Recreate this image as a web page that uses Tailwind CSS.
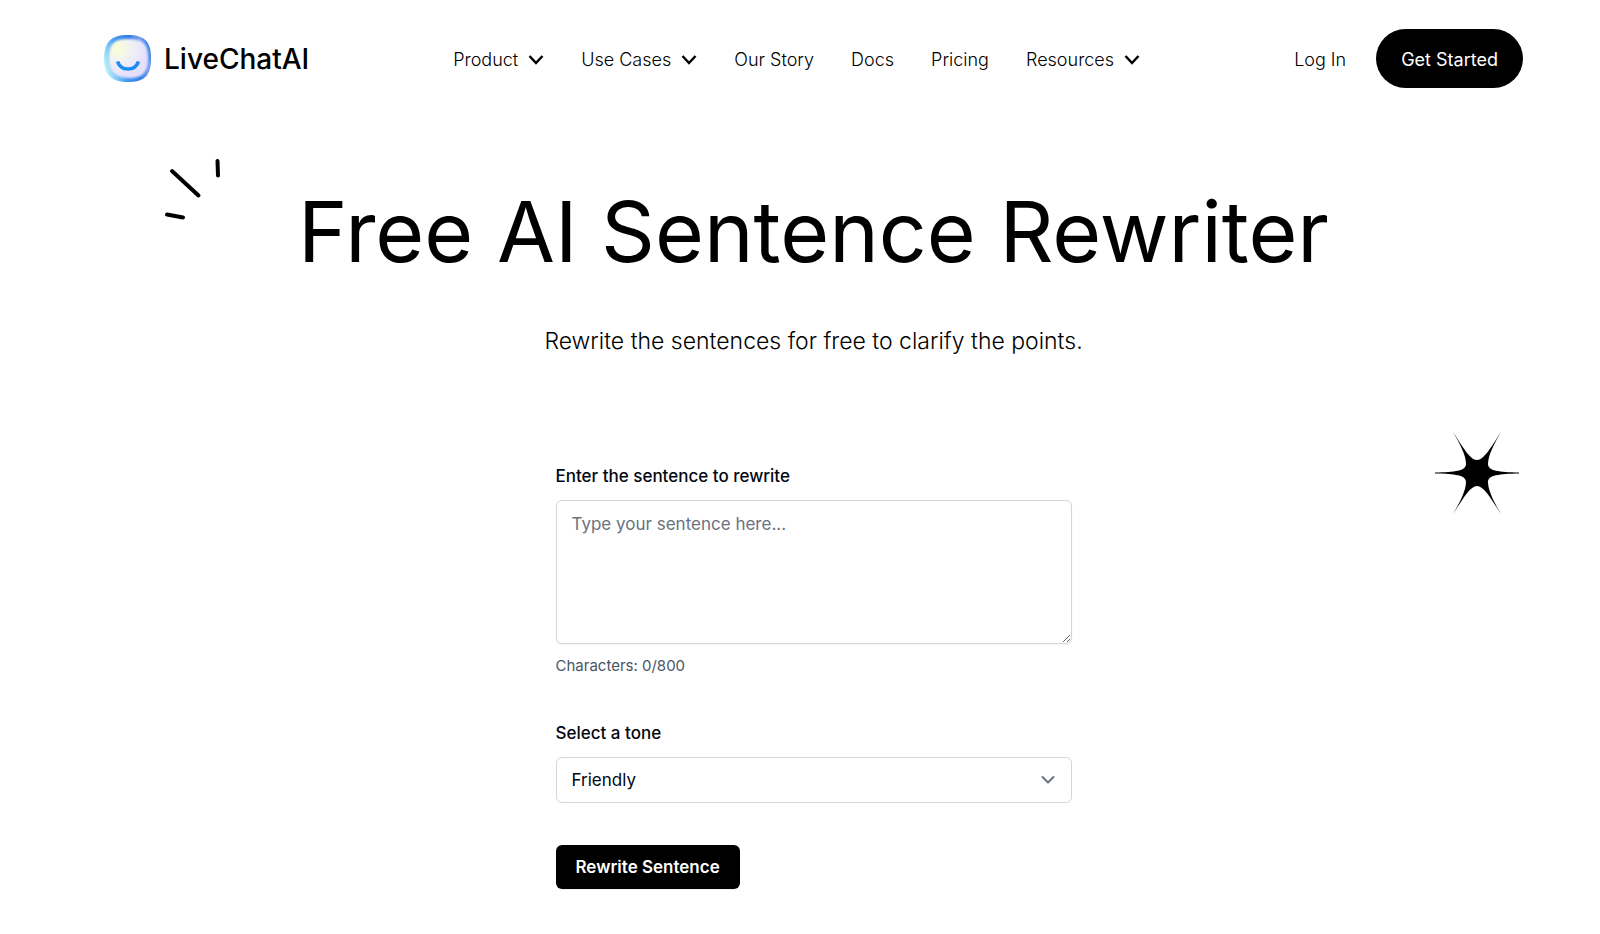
<!DOCTYPE html>
<html lang="en">
<head>
    <meta charset="UTF-8">
    <meta name="viewport" content="width=device-width, initial-scale=1.0">
    <title>Free AI Sentence Rewriter - LiveChatAI</title>
    <script src="https://cdn.jsdelivr.net/npm/@tailwindcss/browser@4"></script>
</head>
<body class="bg-white text-black font-['Inter',sans-serif]">
    <header class="flex items-center justify-between pl-[104px] pr-[77px] pt-[29px]">
        <a href="#" class="flex items-center gap-3">
            <svg class="size-12" viewBox="0 0 48 48" fill="none" aria-hidden="true">
                <defs>
                    <linearGradient id="ring" x1="0" y1="34" x2="48" y2="20" gradientUnits="userSpaceOnUse">
                        <stop offset="0" stop-color="#c8fbfb"/>
                        <stop offset="0.35" stop-color="#4a9df0"/>
                        <stop offset="0.65" stop-color="#2f7de6"/>
                        <stop offset="0.86" stop-color="#7f9df0"/>
                        <stop offset="1" stop-color="#2f86ec"/>
                    </linearGradient>
                    <radialGradient id="face" cx="13" cy="13" r="30" gradientUnits="userSpaceOnUse">
                        <stop offset="0" stop-color="#fbffd2"/>
                        <stop offset="0.5" stop-color="#f0f1f6"/>
                        <stop offset="1" stop-color="#e4dffb"/>
                    </radialGradient>
                    <filter id="soft" x="-10%" y="-10%" width="120%" height="120%">
                        <feGaussianBlur stdDeviation="0.8"/>
                    </filter>
                </defs>
                <path d="M24 0C41 0 47 7 47 23.500C47 40 41 47 24 47C7 47 0 40 0 23.500C0 7 7 0 24 0Z" fill="url(#ring)"/>
                <path d="M24 4C39 4 44 9 44 23C44 38 38 43 25 43C11 43 5 37 5 23C5 9 10 4 24 4Z" fill="url(#face)" filter="url(#soft)"/>
                <path d="M13.500 26.500C17 36.500 31 36.500 34.500 26.500" stroke="#1b8cf5" stroke-width="3.600"/>
            </svg>
            <span class="text-[28px] leading-9 font-medium">LiveChatAI</span>
        </a>
        <nav class="flex items-center gap-[37px] pt-0.5 pr-2.5 text-lg leading-6 font-light">
            <button class="flex items-center gap-[10px]">Product
                <svg class="w-4 h-3" viewBox="0 0 16 12" fill="none" stroke="currentColor" stroke-width="2.500" aria-hidden="true"><path d="M1.500 2L8 9L14.500 2"/></svg>
            </button>
            <button class="flex items-center gap-[10px]">Use Cases
                <svg class="w-4 h-3" viewBox="0 0 16 12" fill="none" stroke="currentColor" stroke-width="2.500" aria-hidden="true"><path d="M1.500 2L8 9L14.500 2"/></svg>
            </button>
            <a href="#">Our Story</a>
            <a href="#">Docs</a>
            <a href="#">Pricing</a>
            <button class="flex items-center gap-[10px]">Resources
                <svg class="w-4 h-3" viewBox="0 0 16 12" fill="none" stroke="currentColor" stroke-width="2.500" aria-hidden="true"><path d="M1.500 2L8 9L14.500 2"/></svg>
            </button>
        </nav>
        <div class="flex items-center gap-[30px] text-lg leading-6">
            <a href="#" class="pt-0.5 font-light">Log In</a>
            <a href="#" class="flex items-center h-[59px] px-[25px] pt-0.5 rounded-full bg-black text-white">Get Started</a>
        </div>
    </header>

    <main class="relative px-6 pb-11 pl-[51px]">
        <svg class="absolute left-[164px] top-[68px] w-[60px] h-[66px]" viewBox="0 0 60 66" fill="none" stroke="black" stroke-width="4" stroke-linecap="round" aria-hidden="true">
            <path d="M8 15L34.500 39.500M53.500 5L54 19.500M3 58.500L19 61.500"/>
        </svg>
        <svg class="absolute right-[81px] top-[342px] w-[84px] h-[86px]" viewBox="0 0 84 86" aria-hidden="true">
            <path d="M0 42.500C20 42 31 41 31 34C31 25 24 12 18 2C28 17 35 30 42 30C49 30 56 17 66 2C60 12 53 25 53 34C53 41 64 42 84 42.500V43.500C64 44 53 45 53 52C53 61 60 74 66 84C56 69 49 56 42 56C35 56 28 69 18 84C24 74 31 61 31 52C31 45 20 44 0 43.500Z"/>
        </svg>

        <h1 class="pt-[88px] text-center text-[84px] leading-[112px]">Free AI Sentence Rewriter</h1>
        <p class="mt-[35px] text-center text-[23px] leading-9 font-light">Rewrite the sentences for free to clarify the points.</p>

        <form class="mt-[105px] mx-auto max-w-[516px] text-[#030712]">
            <label for="sentence" class="block text-[17px] leading-6 font-medium">Enter the sentence to rewrite</label>
            <textarea id="sentence" maxlength="800" placeholder="Type your sentence here..." class="block mt-3 w-full h-36 px-[15px] py-[11px] rounded-md border border-gray-300 shadow-xs bg-white text-[17px] leading-6 placeholder:text-gray-500"></textarea>
            <p class="mt-[10px] text-[15px] leading-6 text-gray-600">Characters: <span id="count">0</span>/800</p>
            <label for="tone" class="block mt-[43px] text-[17px] leading-6 font-medium">Select a tone</label>
            <div class="relative mt-3">
                <select id="tone" class="block w-full h-[46px] px-[15px] rounded-md border border-gray-300 bg-white text-[17px] leading-6 appearance-none">
                    <option>Friendly</option>
                    <option>Formal</option>
                    <option>Casual</option>
                </select>
                <svg class="absolute right-4 top-[15px] w-4 h-4 pointer-events-none text-gray-500" viewBox="0 0 16 16" fill="none" stroke="currentColor" stroke-width="2" stroke-linecap="round" stroke-linejoin="round" aria-hidden="true"><path d="M2.500 5L8 10.500L13.500 5"/></svg>
            </div>
            <button type="button" class="mt-[42px] h-11 px-5 rounded-md bg-black text-white text-[17px] leading-6 font-semibold shadow-xs">Rewrite Sentence</button>
        </form>
    </main>

    <script>
        const sentence = document.getElementById('sentence');
        sentence.addEventListener('input', function() {
            document.getElementById('count').textContent = sentence.value.length;
        });
    </script>
</body>
</html>
